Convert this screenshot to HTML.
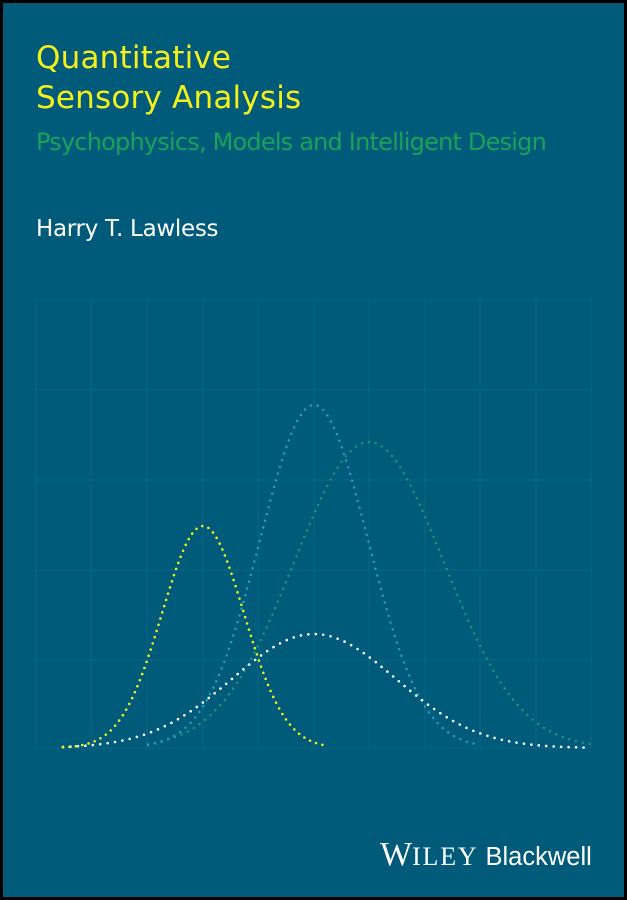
<!DOCTYPE html>
<html><head><meta charset="utf-8">
<style>
html,body{margin:0;padding:0;background:#000;}
#c{position:relative;width:621px;height:894px;margin:3px;background:#005b7b;overflow:hidden;}
.t{position:absolute;white-space:nowrap;font-family:"DejaVu Sans","Liberation Sans",sans-serif;}
svg{position:absolute;left:-3px;top:-3px;}
</style></head><body>
<div id="c">
<div class="t" style="left:33px;top:35px;color:#f4f01c;font-size:31px;line-height:40px;letter-spacing:0.2px;">Quantitative<br>Sensory Analysis</div>
<div class="t" style="left:33px;top:125px;color:#18a25a;font-size:24px;letter-spacing:-0.8px;">Psychophysics, Models and Intelligent Design</div>
<div class="t" style="left:33px;top:213px;color:#fff;font-size:23px;letter-spacing:-0.3px;">Harry T. Lawless</div>
<div class="t" style="left:377px;top:833px;color:#fff;"><span style="font-family:'Liberation Serif',serif;font-size:34px;">W</span><span style="font-family:'Liberation Serif',serif;font-size:26px;letter-spacing:1.8px;">ILEY</span><span style="font-family:'Liberation Sans',sans-serif;font-size:25.5px;margin-left:7px;">Blackwell</span></div>
<svg id="s" width="627" height="900" viewBox="0 0 627 900"></svg>
</div>
<script>
var s=document.getElementById('s'),h='';
var xs=[36,91.5,147,203,258,314,369,425,480,536,591];
xs.forEach(function(x){h+='<line x1="'+x+'" y1="300" x2="'+x+'" y2="748" stroke="#0b6485" stroke-width="1"/>';});
[300,390,480,570,660,748].forEach(function(y){h+='<line x1="36" y1="'+y+'" x2="591" y2="'+y+'" stroke="#0b6485" stroke-width="1"/>';});
function g(mu,sig,H,x0,x1,col,w,dash){var d='';for(var x=x0;x<=x1;x+=0.5){var y=748-H*Math.exp(-Math.pow((x-mu)/sig,2)/2);d+=(d?'L':'M')+x.toFixed(1)+' '+y.toFixed(1);}
h+='<path d="'+d+'" fill="none" stroke="'+col+'" stroke-width="'+w+'" stroke-linecap="round" stroke-dasharray="0 '+dash+'"/>';}
g(369,75,306,148,590,'#14a070',2.4,7);
g(314,54,343,148,480,'#22a8c2',2.4,7);
g(314,82,114,63,585,'#ffffff',2.6,7.5);
g(203,41,222,63,326,'#f4f21c',2.6,6.5);
s.innerHTML=h;
</script>
</body></html>
